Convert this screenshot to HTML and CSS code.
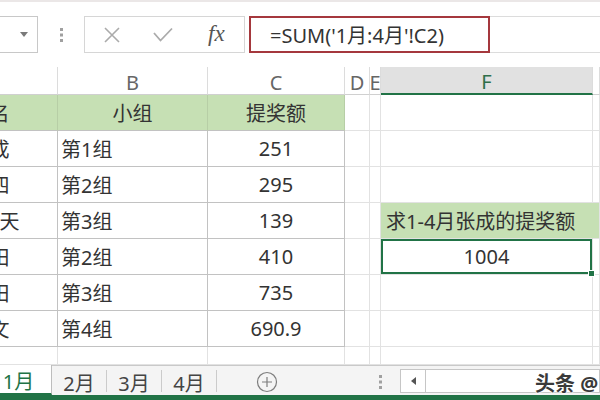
FILE: index.html
```html
<!DOCTYPE html>
<html lang="zh-CN">
<head>
    <meta charset="UTF-8">
    <meta name="viewport" content="width=device-width, initial-scale=1.0">
    <title>提奖额汇总</title>
    <link rel="stylesheet" href="styles.css">
</head>
<body>
    <div class="app">
        <div class="top-edge"></div>

        <!-- formula bar -->
        <div class="formula-bar">
            <div class="name-box">
                <svg class="caret" width="8" height="5" viewBox="0 0 8 5"><path d="M0 0 L8 0 L4 5 Z" fill="#7a7a7a"/></svg>
            </div>
            <div class="grip">
                <svg width="3" height="14" viewBox="0 0 3 14"><rect x="0" y="0" width="3" height="3" fill="#a0a0a0"/><rect x="0" y="5.5" width="3" height="3" fill="#a0a0a0"/><rect x="0" y="11" width="3" height="3" fill="#a0a0a0"/></svg>
            </div>
            <div class="fx-box">
                <svg class="fx-cancel" width="18" height="16" viewBox="0 0 18 16"><path d="M2 1 L16 15 M16 1 L2 15" stroke="#ababab" stroke-width="1.6" fill="none"/></svg>
                <svg class="fx-enter" width="20" height="16" viewBox="0 0 20 16"><path d="M1 6 L7.5 13.5 L19 1.5" stroke="#ababab" stroke-width="1.8" fill="none"/></svg>
                <span class="fx-label">fx</span>
            </div>
            <div class="formula">
                <div class="formula-mark">=SUM('1月:4月'!C2)</div>
            </div>
        </div>

        <!-- worksheet -->
        <div class="sheet">
            <div class="cell col-head">A</div>
            <div class="cell col-head">B</div>
            <div class="cell col-head">C</div>
            <div class="cell col-head">D</div>
            <div class="cell col-head">E</div>
            <div class="cell col-head sel">F</div>
            <div class="cell col-head"></div>

            <div class="cell tb green center">姓名</div>
            <div class="cell tb green center">小组</div>
            <div class="cell tb green center">提奖额</div>
            <div class="cell"></div>
            <div class="cell"></div>
            <div class="cell"></div>
            <div class="cell"></div>

            <div class="cell tb center">张成</div>
            <div class="cell tb left">第1组</div>
            <div class="cell tb center">251</div>
            <div class="cell"></div>
            <div class="cell"></div>
            <div class="cell"></div>
            <div class="cell"></div>

            <div class="cell tb center">李四</div>
            <div class="cell tb left">第2组</div>
            <div class="cell tb center">295</div>
            <div class="cell"></div>
            <div class="cell"></div>
            <div class="cell"></div>
            <div class="cell"></div>

            <div class="cell tb center">王小天</div>
            <div class="cell tb left">第3组</div>
            <div class="cell tb center">139</div>
            <div class="cell"></div>
            <div class="cell"></div>
            <div class="cell green left note">求1-4月张成的提奖额</div>
            <div class="cell green"></div>

            <div class="cell tb center">刘田</div>
            <div class="cell tb left">第2组</div>
            <div class="cell tb center">410</div>
            <div class="cell"></div>
            <div class="cell"></div>
            <div class="cell center active">1004<span class="fill-handle"></span></div>
            <div class="cell"></div>

            <div class="cell tb center">赵田</div>
            <div class="cell tb left">第3组</div>
            <div class="cell tb center">735</div>
            <div class="cell"></div>
            <div class="cell"></div>
            <div class="cell"></div>
            <div class="cell"></div>

            <div class="cell tb center">孙文</div>
            <div class="cell tb left">第4组</div>
            <div class="cell tb center">690.9</div>
            <div class="cell"></div>
            <div class="cell"></div>
            <div class="cell"></div>
            <div class="cell"></div>

            <div class="cell"></div>
            <div class="cell"></div>
            <div class="cell"></div>
            <div class="cell"></div>
            <div class="cell"></div>
            <div class="cell"></div>
            <div class="cell"></div>
        </div>

        <!-- sheet tabs -->
        <div class="tabs">
            <div class="tab current">1月</div>
            <div class="tab">2月</div>
            <div class="tab">3月</div>
            <div class="tab">4月</div>
            <svg class="add-sheet" width="22" height="22" viewBox="0 0 22 22"><circle cx="11" cy="11" r="9.5" stroke="#7d7d7d" stroke-width="1.2" fill="none"/><path d="M11 6 V16 M6 11 H16" stroke="#7d7d7d" stroke-width="1.2"/></svg>

            <div class="tabs-right">
                <div class="grip">
                    <svg width="3" height="14" viewBox="0 0 3 14"><rect x="0" y="0" width="3" height="3" fill="#a0a0a0"/><rect x="0" y="5.5" width="3" height="3" fill="#a0a0a0"/><rect x="0" y="11" width="3" height="3" fill="#a0a0a0"/></svg>
                </div>
                <div class="hscroll">
                    <div class="hscroll-btn">
                        <svg width="5" height="8" viewBox="0 0 5 8"><path d="M5 0 L0 4 L5 8 Z" fill="#555"/></svg>
                    </div>
                </div>
            </div>

            <div class="watermark">头条 @</div>
        </div>

        <div class="status"></div>
    </div>
</body>
</html>
```

FILE: styles.css
```css
/* page */
body {
    margin: 0;
    width: 600px;
    height: 400px;
    overflow: hidden;
    background: #ffffff;
    font-family: "Noto Sans", "Noto Sans CJK SC", sans-serif;
    color: #333;
}
.app {
    display: flex;
    flex-direction: column;
    height: 400px;
}
.top-edge {
    height: 2px;
    background: #ebe7e7;
}

/* formula bar */
.formula-bar {
    display: flex;
    height: 37px;
    margin-top: 14px;
}
.name-box {
    box-sizing: border-box;
    width: 98px;
    margin-left: -60px;
    border: 1px solid #c8c8c8;
    display: flex;
    align-items: center;
    justify-content: flex-end;
    padding-right: 9px;
}
.grip {
    width: 46px;
    display: flex;
    align-items: center;
    justify-content: center;
}
.fx-box {
    box-sizing: border-box;
    width: 161px;
    border: 1px solid #d6d6d6;
    display: flex;
    align-items: center;
    padding-left: 18px;
}
.fx-enter {
    margin-left: 32px;
}
.fx-label {
    margin-left: 35px;
    font-family: "Liberation Serif", serif;
    font-style: italic;
    font-size: 23px;
    color: #555;
    line-height: 1;
    padding-bottom: 3px;
}
.formula {
    flex: 1;
    margin-left: 4px;
    box-sizing: border-box;
    border-top: 1px solid #dcdcdc;
    border-bottom: 1px solid #dcdcdc;
    display: flex;
}
.formula-mark {
    box-sizing: border-box;
    width: 241px;
    margin: -1px 0;
    border: 2px solid #a5383d;
    padding-left: 19px;
    display: flex;
    align-items: center;
    font-size: 20px;
    color: #333;
    white-space: nowrap;
}

/* worksheet grid */
.sheet {
    display: grid;
    grid-template-columns: 136px 150px 137px 25px 11px 212px 1fr;
    grid-template-rows: 28px repeat(7, 36px) 1fr;
    width: 678px;
    height: 298px;
    margin-top: 14px;
    margin-left: -78px;
    overflow: hidden;
}
.cell {
    box-sizing: border-box;
    min-width: 0;
    border-right: 1px solid #e2e2e2;
    border-bottom: 1px solid #e2e2e2;
    display: flex;
    align-items: center;
    font-size: 20px;
    white-space: nowrap;
}
.col-head {
    justify-content: center;
    padding-top: 3px;
    color: #666;
    border-right-color: #dcdcdc;
    border-bottom-color: #d0d0d0;
}
.col-head.sel {
    background: #e1e1e1;
    color: #2f6f4a;
    border-bottom: 2px solid #217346;
}
.cell.tb {
    border-color: #c2c2c2;
}
.green {
    background: #c6e0b4;
}
.cell.tb.green {
    border-right-color: #b7cea6;
}
.center {
    justify-content: center;
}
.left {
    padding-left: 3px;
}
.note {
    padding-left: 5px;
    border-right-color: #c6e0b4;
}
.active {
    position: relative;
    box-shadow: inset 0 0 0 2px #217346;
}
.fill-handle {
    position: absolute;
    right: -3px;
    bottom: -3px;
    width: 5px;
    height: 5px;
    background: #217346;
    border: 1px solid #ffffff;
}

/* sheet tabs */
.tabs {
    position: relative;
    display: flex;
    align-items: stretch;
    box-sizing: border-box;
    height: 30px;
    background: #f4f4f4;
    border-top: 1px solid #c9c9c9;
}
.tab {
    box-sizing: border-box;
    width: 55px;
    margin: 4px 0 3px;
    border-right: 1px solid #cbcbcb;
    display: flex;
    align-items: center;
    justify-content: center;
    padding-top: 3px;
    font-size: 20px;
    color: #444;
}
.tab.current {
    width: 66px;
    margin: -1px 0 0 -14px;
    background: #ffffff;
    color: #217346;
    border-right-color: #bdbdbd;
    border-bottom: 2px solid #217346;
}
.add-sheet {
    align-self: center;
    margin: 2px 0 0 39px;
}
.tabs-right {
    margin-left: auto;
    display: flex;
    align-items: stretch;
}
.tabs-right .grip {
    width: 20px;
    margin-right: 10px;
    padding-top: 2px;
}
.hscroll {
    box-sizing: border-box;
    width: 200px;
    margin: 3px 0 2px;
    background: #ffffff;
    border: 1px solid #c6c6c6;
    display: flex;
}
.hscroll-btn {
    width: 24px;
    border-right: 1px solid #c6c6c6;
    display: flex;
    align-items: center;
    justify-content: center;
}
.watermark {
    position: absolute;
    left: 535px;
    top: 2px;
    font-size: 20px;
    font-weight: bold;
    color: #3a3a3a;
    white-space: nowrap;
    text-shadow: 0 0 2px #fff, 0 0 2px #fff, 0 0 3px #fff;
}

.status {
    height: 5px;
    background: #217346;
}
```
